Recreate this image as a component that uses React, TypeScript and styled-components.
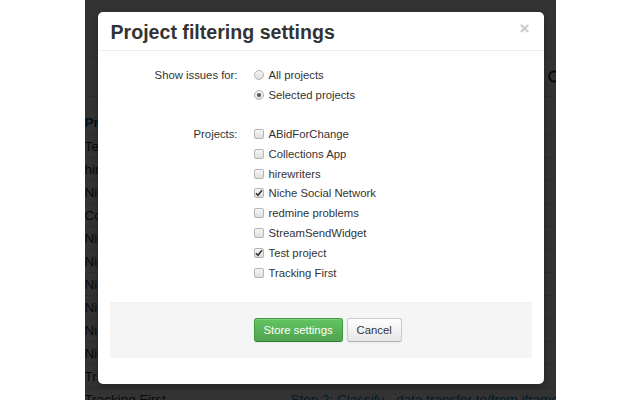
import styled, { createGlobalStyle } from "styled-components";

const Global = createGlobalStyle`
	* { box-sizing: border-box; }
	html, body { margin: 0; padding: 0; background: #fff; }
	body {
		font-family: "Liberation Sans", Arial, sans-serif;
		font-size: 11.3px;
		color: #333;
	}
`;

const Stage = styled.div`
	width: 640px;
	height: 400px;
	display: flex;
	justify-content: center;
	overflow: hidden;
`;

const Sheet = styled.div`
	position: relative;
	width: 471px;
	height: 400px;
	background: #fff;
	overflow: hidden;
`;

const TopBar = styled.div`
	height: 58px;
	border-bottom: 1px solid #e5e5e5;
`;

const Tools = styled.div`
	height: 39px;
	border-bottom: 1px solid #ddd;
	display: flex;
	justify-content: flex-end;
	align-items: center;
	margin-right: -5px;
	padding-bottom: 2px;
`;

const Table = styled.div`
	margin-top: 14px;
	display: flex;
	flex-direction: column;
`;

const Row = styled.div<{ $head?: boolean }>`
	height: 23px;
	display: flex;
	align-items: center;
	border-top: ${(p) => (p.$head ? "none" : "1px solid #ddd")};
	font-size: 13.5px;
	font-weight: ${(p) => (p.$head ? "bold" : "normal")};
	color: ${(p) => (p.$head ? "#0b5c8c" : "#333")};
`;

const Cell = styled.span<{ $w?: number; $link?: boolean }>`
	width: ${(p) => p.$w ?? 206}px;
	white-space: nowrap;
	overflow: hidden;
	color: ${(p) => (p.$link ? "#0088cc" : "inherit")};
`;

const Shade = styled.div`
	position: absolute;
	inset: 0;
	background: rgba(0, 0, 0, 0.8);
`;

const Modal = styled.div`
	position: absolute;
	left: 13px;
	top: 12px;
	width: 446px;
	height: 372px;
	background: #fff;
	border-radius: 5px;
	box-shadow: 0 3px 7px rgba(0, 0, 0, 0.3);
	display: flex;
	flex-direction: column;
`;

const Header = styled.div`
	height: 39px;
	padding: 0 13px;
	border-bottom: 1px solid #eee;
	display: flex;
	align-items: center;
	justify-content: space-between;
`;

const Title = styled.h3`
	margin: 0;
	font-size: 19.6px;
	font-weight: bold;
	color: #333;
	line-height: 26px;
	padding-top: 2px;
`;

const Close = styled.span`
	font-size: 17px;
	font-weight: bold;
	color: #c8c8c8;
	margin-top: -6px;
	margin-right: 1px;
	line-height: 1;
`;

const Body = styled.div`
	padding: 14px 12px 0;
	display: flex;
	flex-direction: column;
	gap: 19px;
`;

const Group = styled.div`
	display: grid;
	grid-template-columns: 128px 1fr;
	column-gap: 16px;
`;

const Label = styled.div`
	text-align: right;
	line-height: 20px;
`;

const Options = styled.div`
	display: flex;
	flex-direction: column;
`;

const Option = styled.label`
	display: flex;
	align-items: center;
	height: 19.9px;
	gap: 5px;
`;

const Box = styled.span<{ $round?: boolean }>`
	width: 10px;
	height: 10px;
	border: 1px solid #b4b4b4;
	border-radius: ${(p) => (p.$round ? "50%" : "2px")};
	background: linear-gradient(#f6f6f6, #dedede);
	display: flex;
	align-items: center;
	justify-content: center;
	flex: none;
`;

const Dot = styled.span`
	width: 4px;
	height: 4px;
	border-radius: 50%;
	background: #555;
`;

const Footer = styled.div`
	margin: 19px 12px 0;
	height: 56px;
	background: #f5f5f5;
	border-top: 1px solid #eee;
	display: flex;
	align-items: center;
	gap: 4px;
	padding-left: 144px;
`;

const Button = styled.button<{ $primary?: boolean }>`
	height: 24px;
	padding: 0 9px;
	font-family: inherit;
	font-size: 11.3px;
	border-radius: 3px;
	border: 1px solid ${(p) => (p.$primary ? "#3d9b3d" : "#ccc")};
	border-bottom-color: ${(p) => (p.$primary ? "#2f7f2f" : "#b3b3b3")};
	color: ${(p) => (p.$primary ? "#fff" : "#333")};
	background: ${(p) =>
		p.$primary
			? "linear-gradient(#62c462, #51a351)"
			: "linear-gradient(#fff, #e6e6e6)"};
	box-shadow: inset 0 1px 0 rgba(255, 255, 255, 0.2), 0 1px 2px rgba(0, 0, 0, 0.05);
`;

const Check = () => (
	<svg width="8" height="8" viewBox="0 0 8 8">
		<path d="M1 4.2 L3 6.3 L7 1.2" fill="none" stroke="#333" strokeWidth="1.5" />
	</svg>
);

const Refresh = () => (
	<svg width="14" height="14" viewBox="0 0 14 14">
		<path d="M11.5 5 A5 5 0 1 0 12 8.5" fill="none" stroke="#333" strokeWidth="2" />
		<path d="M9 4.5 L12.5 5.5 L12.5 1.5 Z" fill="#333" />
	</svg>
);

const projects = [
	{ name: "ABidForChange", on: false },
	{ name: "Collections App", on: false },
	{ name: "hirewriters", on: false },
	{ name: "Niche Social Network", on: true },
	{ name: "redmine problems", on: false },
	{ name: "StreamSendWidget", on: false },
	{ name: "Test project", on: true },
	{ name: "Tracking First", on: false },
];

// rows of the issue list behind the dialog
const rows = [
	["Test project", "Step 1: Review"],
	["hirewriters", "Step 1: Review"],
	["Niche Social Network", "Step 1: Review"],
	["Collections App", "Step 1: Review"],
	["Niche Social Network", "Step 2: Review"],
	["Niche Social Network", "Step 3: Review"],
	["Niche Social Network", "Step 4: Review"],
	["Niche Social Network", "Step 5: Review"],
	["Niche Social Network", "Step 6: Review"],
	["Niche Social Network", "Step 7: Review"],
	["Tracking First", "Step 1: Review"],
	["Tracking First", "Step 2: Classify - data transfer to/from iframe"],
];

function App() {
	return (
		<Stage>
			<Global />
			<Sheet>
				<TopBar />
				<Tools>
					<Refresh />
				</Tools>
				<Table>
					<Row $head>
						<Cell>Project</Cell>
						<Cell $w={265}>Issue</Cell>
					</Row>
					{rows.map(([p, s], i) => (
						<Row key={i}>
							<Cell>{p}</Cell>
							<Cell $w={265} $link>
								{s}
							</Cell>
						</Row>
					))}
				</Table>
				<Shade />
				<Modal>
					<Header>
						<Title>Project filtering settings</Title>
						<Close>×</Close>
					</Header>
					<Body>
						<Group>
							<Label>Show issues for:</Label>
							<Options>
								<Option>
									<Box $round />
									All projects
								</Option>
								<Option>
									<Box $round>
										<Dot />
									</Box>
									Selected projects
								</Option>
							</Options>
						</Group>
						<Group>
							<Label>Projects:</Label>
							<Options>
								{projects.map((p) => (
									<Option key={p.name}>
										<Box>{p.on && <Check />}</Box>
										{p.name}
									</Option>
								))}
							</Options>
						</Group>
					</Body>
					<Footer>
						<Button $primary>Store settings</Button>
						<Button>Cancel</Button>
					</Footer>
				</Modal>
			</Sheet>
		</Stage>
	);
}

export default App;
